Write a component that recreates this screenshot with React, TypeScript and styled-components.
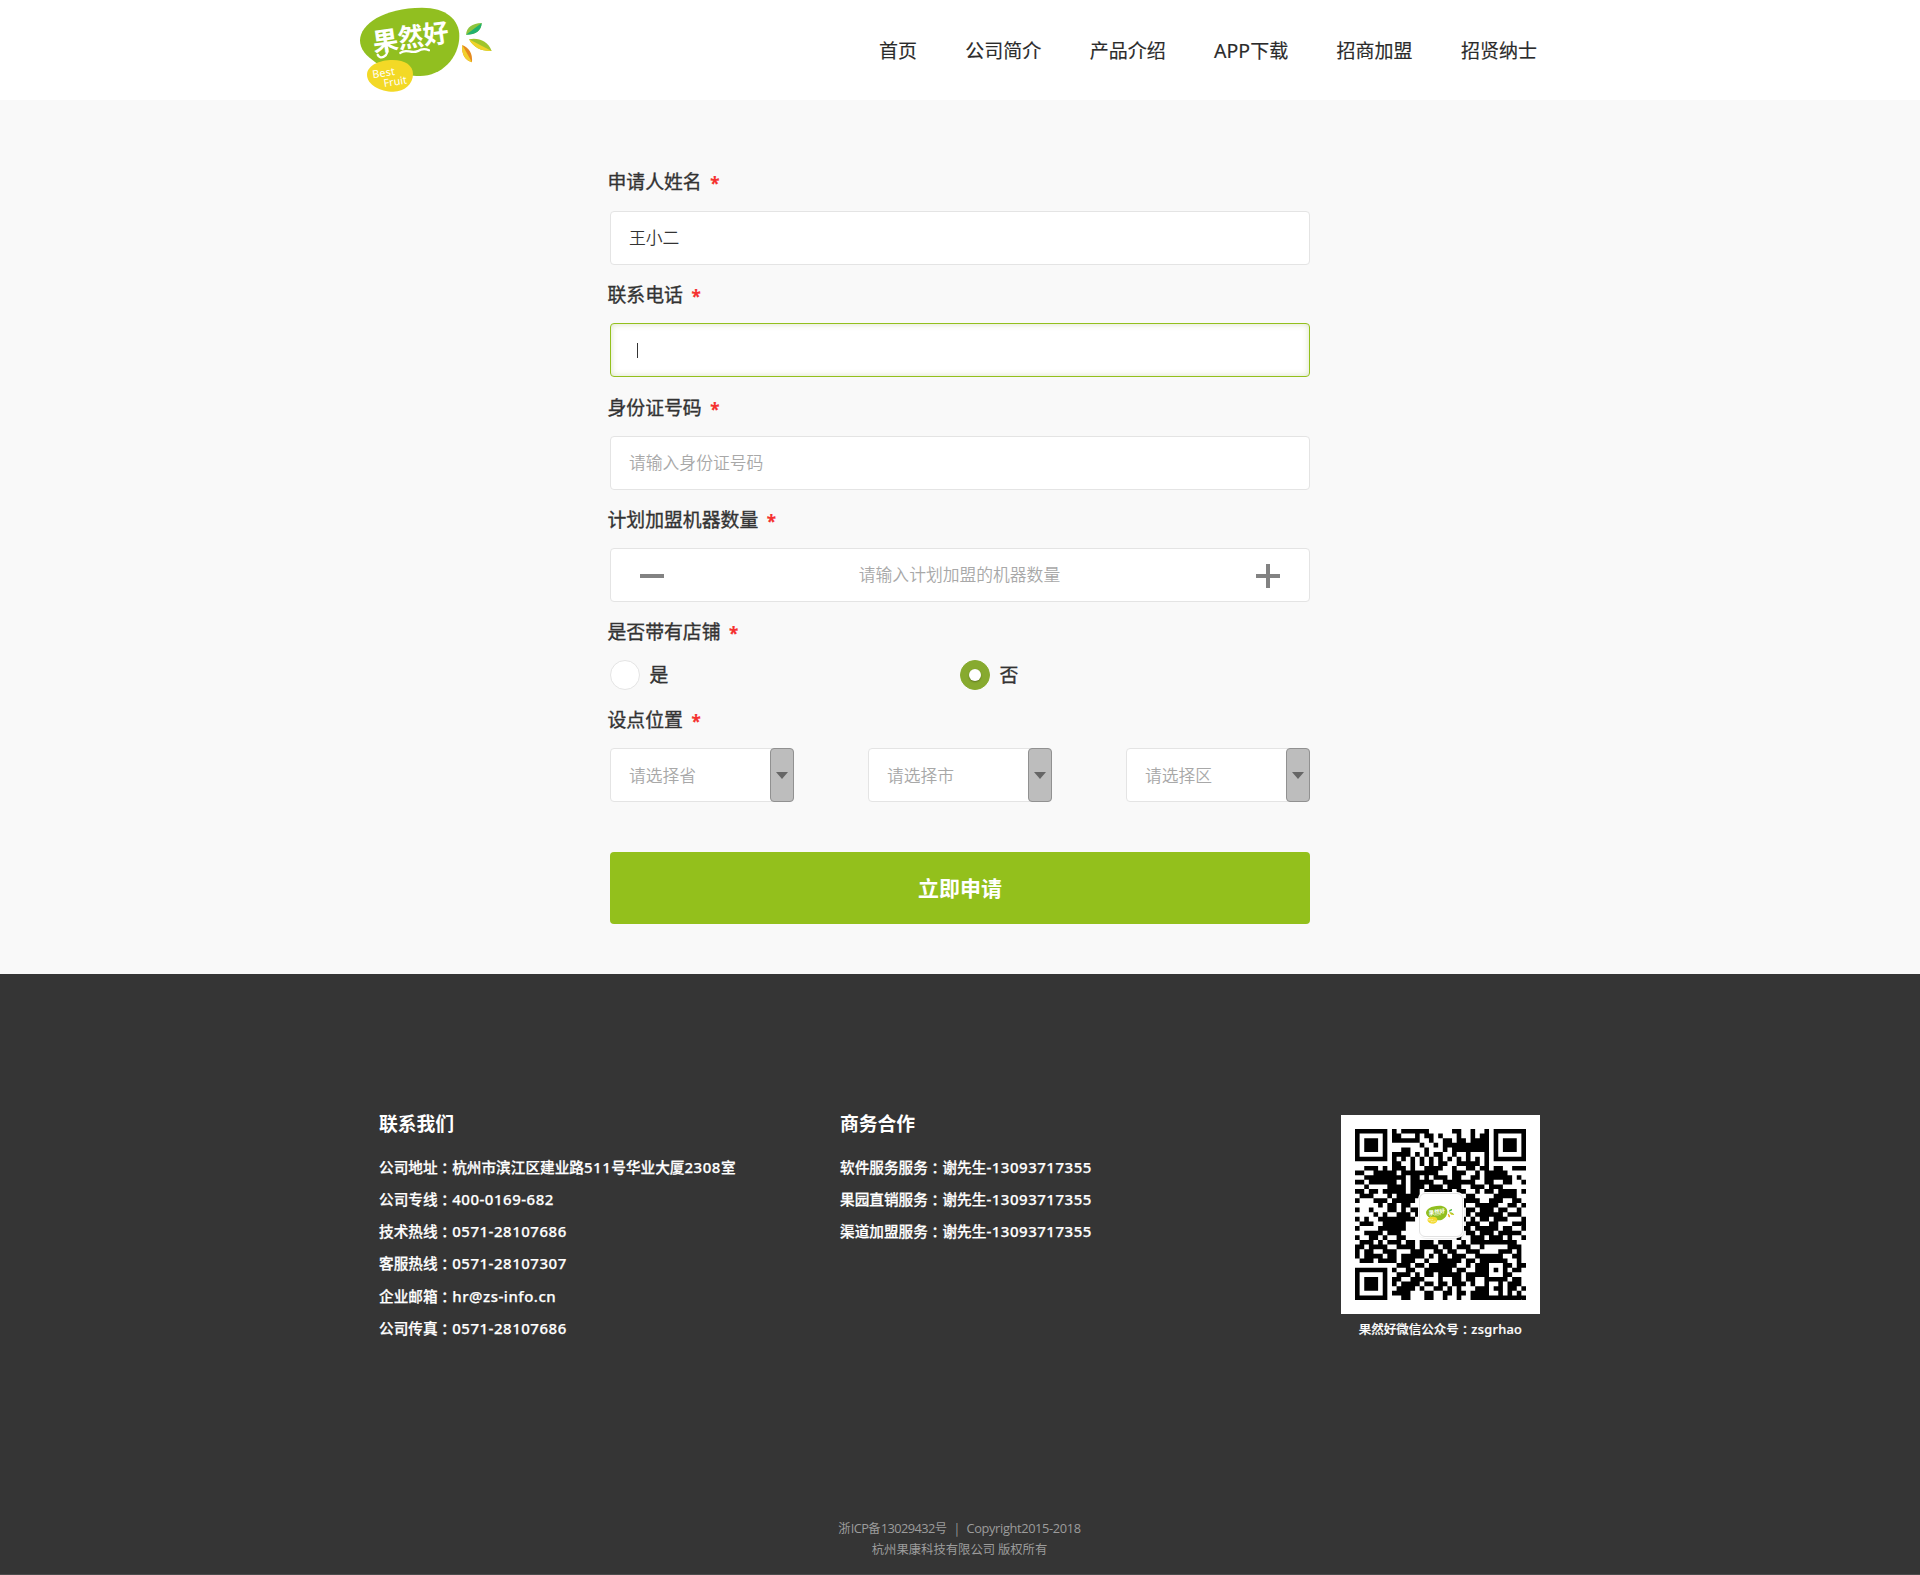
import React, { useState } from "react";
import styled, { createGlobalStyle, css } from "styled-components";

const green = "#93c01c";
const ink = "#333";

const GlobalStyle = createGlobalStyle`
  *, *::before, *::after { box-sizing: border-box; }
  body {
    margin: 0;
    background: #f9f9f9;
    color: ${ink};
    font-family: "Noto Sans CJK SC", "Noto Sans", sans-serif;
  }
  input, button { font-family: inherit; }
`;

/* ---------- header ---------- */

const Header = styled.header`
  height: 100px;
  background: #fff;
`;

const HeaderInner = styled.div`
  width: 1200px;
  margin: 0 auto;
  display: flex;
  justify-content: space-between;
  align-items: flex-start;
`;

const Nav = styled.nav`
  display: flex;
  gap: 48.4px;
  padding-right: 23px;
`;

const NavLink = styled.a`
  line-height: 100px;
  font-size: 19px;
  font-weight: 400;
  color: #2b2b2b;
  -webkit-text-stroke: 0.15px #2b2b2b;
  white-space: nowrap;
`;

/* ---------- form ---------- */

const Form = styled.form`
  width: 700px;
  height: 874px;
  margin: 0 auto;
  padding-top: 67px;
`;

const Field = styled.section<{ $gap?: number }>`
  margin-bottom: ${(p) => p.$gap ?? 16}px;
`;

const Label = styled.div<{ $space?: number }>`
  display: flex;
  align-items: center;
  height: 28px;
  margin: 0 0 ${(p) => p.$space ?? 15}px -2.5px;
  font-size: 18.85px;
  line-height: 28px;
  -webkit-text-stroke: 0.35px ${ink};
`;

const Star = styled.span`
  margin-left: 8.5px;
  height: 28px;
  font: 700 17px/34px "Noto Sans", sans-serif;
  color: #f5312f;
  -webkit-text-stroke: 0.2px #f5312f;
`;

const boxed = css`
  height: 54px;
  background: #fff;
  border: 1px solid #e4e4e4;
  border-radius: 4px;
`;

const entry = css`
  font-size: 16.8px;
  font-weight: 350;
  color: ${ink};
  &::placeholder {
    color: #a8a8a8;
    opacity: 1;
  }
`;

const TextInput = styled.input`
  ${boxed}
  ${entry}
  display: block;
  width: 100%;
  padding: 0 18px 2px;
  outline: none;
`;

const FocusedBox = styled.div`
  ${boxed}
  display: flex;
  align-items: center;
  padding-left: 26px;
  border-color: ${green};
  box-shadow: inset 0 0 6px rgba(120, 150, 40, 0.28);
`;

const Caret = styled.span`
  width: 1px;
  height: 15px;
  background: ${ink};
`;

const Stepper = styled.div`
  ${boxed}
  display: flex;
  align-items: center;
  justify-content: space-between;
  padding: 0 29px;
`;

const StepInput = styled.input`
  ${entry}
  flex: 1;
  min-width: 0;
  border: 0;
  padding: 0 1px 2px 0;
  outline: none;
  background: transparent;
  text-align: center;
`;

const StepButton = styled.button`
  width: 24px;
  height: 24px;
  margin-top: 2px;
  padding: 0;
  border: 0;
  background: none;
  color: #828282;
  svg { display: block; }
`;

const Radios = styled.div`
  display: grid;
  grid-template-columns: 350px 350px;
`;

const RadioItem = styled.label`
  display: flex;
  align-items: center;
  gap: 9.5px;
  height: 30px;
  font-size: 18.85px;
  line-height: 28px;
  -webkit-text-stroke: 0.35px ${ink};
`;

const RadioText = styled.span`
  height: 30px;
`;

const Dot = styled.span<{ $on: boolean }>`
  display: grid;
  place-items: center;
  width: 30px;
  height: 30px;
  border-radius: 50%;
  background: ${(p) => (p.$on ? "#87aa2f" : "#fff")};
  border: 1px solid ${(p) => (p.$on ? "#87aa2f" : "#e4e4e4")};
  &::after {
    content: "";
    width: 12px;
    height: 12px;
    border-radius: 50%;
    background: #fff;
    box-shadow: ${(p) => (p.$on ? "0 1px 2px rgba(0, 0, 0, 0.3)" : "none")};
  }
`;

const Selects = styled.div`
  display: flex;
  justify-content: space-between;
`;

const SelectBox = styled.div`
  ${boxed}
  ${entry}
  display: flex;
  justify-content: space-between;
  width: 184px;
  padding-left: 18px;
  line-height: 52px;
  color: #a8a8a8;
`;

const SelectArrow = styled.span`
  display: grid;
  place-items: center;
  width: 24px;
  height: 54px;
  margin: -1px -1px 0 0;
  background: #bdbdbd;
  border: 1px solid #919191;
  border-radius: 4px;
  &::after {
    content: "";
    border: 6px solid transparent;
    border-top: 7px solid #666;
    border-bottom: 0;
  }
`;

const Submit = styled.button`
  display: block;
  width: 100%;
  height: 72px;
  margin-top: 50px;
  padding: 0 0 3px;
  border: 0;
  border-radius: 4px;
  background: ${green};
  color: #fff;
  font-size: 21px;
  font-weight: 700;
`;

/* ---------- footer ---------- */

const Footer = styled.footer`
  height: 601px;
  background: #353535;
  border-bottom: 1px solid #4c4c4c;
  color: #fff;
  display: flex;
  flex-direction: column;
  justify-content: space-between;
`;

const FooterInner = styled.div`
  width: 1162px;
  margin: 0 auto;
  padding-top: 134px;
  display: grid;
  grid-template-columns: 461px 1fr 199px;
`;

const Column = styled.div`
  display: flex;
  flex-direction: column;
`;

const ColumnTitle = styled.h3`
  margin: 0 0 13px;
  height: 30px;
  font-size: 18.8px;
  line-height: 30px;
  font-weight: 600;
`;

const InfoLine = styled.div`
  height: 32.15px;
  font-size: 14.65px;
  line-height: 32px;
  font-weight: 500;
  -webkit-text-stroke: 0.25px #fff;
  white-space: nowrap;
`;

const Latin = styled.span<{ $size: number; $family: string; $spacing: number }>`
  font-family: ${(p) => p.$family}, sans-serif;
  font-size: ${(p) => p.$size}px;
  letter-spacing: ${(p) => p.$spacing}px;
`;

const Colon = styled.span`
  position: relative;
  top: 1px;
  font-family: "Noto Sans CJK TC", sans-serif;
`;

const QrCard = styled.div`
  display: grid;
  place-items: center;
  width: 199px;
  height: 199px;
  margin: 7px 0 0 -1px;
  background: #fff;
`;

const QrBadge = styled.div`
  display: grid;
  place-items: center;
  width: 44px;
  height: 44px;
  border: 1px solid #e2e2e2;
  border-radius: 6px;
  background: #fff;
  box-shadow: 0 0 0 1px #fff, 1px 1px 2px rgba(0, 0, 0, 0.25);
  grid-area: 1 / 1;
  z-index: 1;
`;

const QrSvg = styled.svg`
  grid-area: 1 / 1;
`;

const QrCaption = styled.div`
  height: 30px;
  margin-left: -2px;
  font-size: 12.5px;
  line-height: 29px;
  font-weight: 500;
  text-align: center;
  white-space: nowrap;
  -webkit-text-stroke: 0.2px #fff;
`;

const Legal = styled.div`
  padding-bottom: 14px;
  color: #9c9c9c;
  font-size: 12.35px;
  line-height: 21px;
  text-align: center;
`;

const LegalRow = styled.div`
  display: flex;
  justify-content: center;
  align-items: baseline;
  height: 21px;
  padding-right: 1px;
  white-space: pre;
`;

const Divider = styled.span`
  margin: 0 8px;
`;

/* ---------- pieces ---------- */

type MixedProps = { text: string; size: number; family?: string; spacing?: number };

function Mixed({ text, size, family = '"Noto Sans"', spacing = 0 }: MixedProps) {
  const parts = text.split(/([\x21-\x7e]+|：)/).filter(Boolean);
  return (
    <>
      {parts.map((part, i) => {
        if (part === "：") return <Colon key={i}>{part}</Colon>;
        if (/^[\x21-\x7e]/.test(part))
          return (
            <Latin key={i} $size={size} $family={family} $spacing={spacing}>
              {part}
            </Latin>
          );
        return <React.Fragment key={i}>{part}</React.Fragment>;
      })}
    </>
  );
}

function Logo({ width }: { width: number }) {
  return (
    <svg width={width} height={(width * 100) / 140} viewBox="60 0 420 300" aria-label="果然好">
      <path
        d="M60 121C61 72 130 24 246 23C318 23 358 58 358 108C358 174 304 228 240 228C210 228 200 226 180 220L108 188C78 168 60 148 60 121Z"
        fill="#91bf20"
      />
      <path
        d="M81 224C81 198 116 180 158 180C196 180 219 197 219 222C219 252 194 275 160 275C120 275 81 254 81 224Z"
        fill="#f3d926"
      />
      <g transform="rotate(-8 212 120)" fill="#fff">
        <text
          x="98"
          y="140"
          fontSize="78"
          fontWeight="700"
          textLength="230"
          lengthAdjust="spacingAndGlyphs"
          fontFamily="Noto Sans CJK SC, sans-serif"
        >
          果然好
        </text>
        <path
          d="M138 132C142 160 112 168 108 150M176 154C196 142 206 162 228 156C242 150 252 152 262 158"
          fill="none"
          stroke="#fff"
          strokeWidth="7"
          strokeLinecap="round"
        />
      </g>
      <g fill="#fff" fontFamily="Noto Sans, sans-serif" fontSize="32" fontWeight="400">
        <text transform="translate(99 235) rotate(-9)" textLength="68">Best</text>
        <text transform="translate(133 261) rotate(-9)" textLength="70">Fruit</text>
      </g>
      <path d="M378 104C380 82 396 70 425 69C424 92 408 104 378 104Z" fill="#8fc53c" />
      <path d="M378 104L425 69C424 92 408 104 378 104Z" fill="#22b16d" />
      <path d="M387 118C416 112 444 124 455 153C424 154 402 144 387 118Z" fill="#9fc42c" />
      <path d="M387 118L455 153C424 154 402 144 387 118Z" fill="#f0d32a" />
      <path d="M367 135C388 144 398 160 396 187C374 180 364 162 367 135Z" fill="#e58a1e" />
      <path d="M367 135L396 187C374 180 364 162 367 135Z" fill="#f2d02d" />
    </svg>
  );
}

const qrRows = [
  "1111111010111111000001100100101111111",
  "1000001011000101101000100101101000001",
  "1011101011111100100110110111101011101",
  "1011101000000010010111111111101011101",
  "1011101000110001000101111111101011101",
  "1000001011110101011001001000101000001",
  "1111111010101010101010101010101111111",
  "0000000011001010101100111110100000000",
  "0011101011101001111001001101101100111",
  "1100111110111111110001110010111110000",
  "0011111111101101011101100110111111010",
  "1101111110101111100111111100110011001",
  "0010000111101110111011100111011100000",
  "1101101111101101111110110010110111101",
  "0111000101111100000000001100001111100",
  "1000111011111000000000011110011100110",
  "0000010110110000000000010011111001101",
  "1001000110101100000000001101110110010",
  "0000101001110100000000001011111101110",
  "1010011111111000000000010101101110001",
  "0111001111100000000000001110011000111",
  "1000011111100000000000011011111011001",
  "0011110111000000000000001101110111110",
  "1001101001100000000000100111011101001",
  "0111010111011011101110010111111111100",
  "1101111001111011110110111001000001110",
  "1011001110001110011011001110000111010",
  "1011110110111110101101110011111100110",
  "0111011110111001001111101101111110010",
  "0000000001110110111111001011100011011",
  "1111111010011001111110110011101010110",
  "1000001001110101101111101111100011000",
  "1011101011001110001001101100111110110",
  "1011101010111101101101110100100101110",
  "1011101001111010011010100011101101101",
  "1000001011110001100110110111100101010",
  "1111111000110001100100100111111111111",
];

function QrCode() {
  const d = qrRows
    .flatMap((row, y) =>
      [...row].map((cell, x) => (cell === "1" ? `M${x} ${y}h1v1h-1z` : ""))
    )
    .join("");
  return (
    <QrSvg width="171" height="171" viewBox="0 0 37 37">
      <path d={d} fill="#000" />
    </QrSvg>
  );
}

const navItems = ["首页", "公司简介", "产品介绍", "APP下载", "招商加盟", "招贤纳士"];
const contact = [
  "公司地址：杭州市滨江区建业路511号华业大厦2308室",
  "公司专线：400-0169-682",
  "技术热线：0571-28107686",
  "客服热线：0571-28107307",
  "企业邮箱：hr@zs-info.cn",
  "公司传真：0571-28107686",
];
const business = [
  "软件服务服务：谢先生-13093717355",
  "果园直销服务：谢先生-13093717355",
  "渠道加盟服务：谢先生-13093717355",
];

function FieldLabel({ children, space }: { children: string; space?: number }) {
  return (
    <Label $space={space}>
      {children}
      <Star>*</Star>
    </Label>
  );
}

export default function App() {
  const [hasShop, setHasShop] = useState("否");
  return (
    <>
      <GlobalStyle />
      <Header>
        <HeaderInner>
          <Logo width={140} />
          <Nav>
            {navItems.map((item) => (
              <NavLink key={item}>
                <Mixed text={item} size={19.5} />
              </NavLink>
            ))}
          </Nav>
        </HeaderInner>
      </Header>

      <Form>
        <Field $gap={15}>
          <FieldLabel space={16}>申请人姓名</FieldLabel>
          <TextInput defaultValue="王小二" />
        </Field>
        <Field>
          <FieldLabel>联系电话</FieldLabel>
          <FocusedBox>
            <Caret />
          </FocusedBox>
        </Field>
        <Field $gap={15}>
          <FieldLabel>身份证号码</FieldLabel>
          <TextInput placeholder="请输入身份证号码" />
        </Field>
        <Field $gap={15}>
          <FieldLabel>计划加盟机器数量</FieldLabel>
          <Stepper>
            <StepButton type="button" aria-label="减少">
              <svg width="24" height="24">
                <path d="M0 10h24v4H0z" fill="currentColor" />
              </svg>
            </StepButton>
            <StepInput placeholder="请输入计划加盟的机器数量" />
            <StepButton type="button" aria-label="增加">
              <svg width="24" height="24">
                <path d="M0 10h10V0h4v10h10v4H14v10h-4V14H0z" fill="currentColor" />
              </svg>
            </StepButton>
          </Stepper>
        </Field>
        <Field $gap={15}>
          <FieldLabel>是否带有店铺</FieldLabel>
          <Radios>
            {["是", "否"].map((option) => (
              <RadioItem key={option} onClick={() => setHasShop(option)}>
                <Dot $on={hasShop === option} />
                <RadioText>{option}</RadioText>
              </RadioItem>
            ))}
          </Radios>
        </Field>
        <Field $gap={0}>
          <FieldLabel>设点位置</FieldLabel>
          <Selects>
            {["请选择省", "请选择市", "请选择区"].map((text) => (
              <SelectBox key={text}>
                {text}
                <SelectArrow />
              </SelectBox>
            ))}
          </Selects>
        </Field>
        <Submit type="button">立即申请</Submit>
      </Form>

      <Footer>
        <FooterInner>
          <Column>
            <ColumnTitle>联系我们</ColumnTitle>
            {contact.map((line) => (
              <InfoLine key={line}>
                <Mixed text={line} size={15} spacing={0.52} />
              </InfoLine>
            ))}
          </Column>
          <Column>
            <ColumnTitle>商务合作</ColumnTitle>
            {business.map((line) => (
              <InfoLine key={line}>
                <Mixed text={line} size={15} spacing={0.52} />
              </InfoLine>
            ))}
          </Column>
          <Column>
            <QrCard>
              <QrCode />
              <QrBadge>
                <Logo width={30} />
              </QrBadge>
            </QrCard>
            <QrCaption>
              <Mixed text="果然好微信公众号：zsgrhao" size={12.8} spacing={0.3} />
            </QrCaption>
          </Column>
        </FooterInner>
        <Legal>
          <LegalRow>
            <Mixed text="浙ICP备13029432号" size={12.8} family={'"Open Sans"'} spacing={-0.55} />
            <Divider>|</Divider>
            <Mixed text="Copyright2015-2018" size={12.8} family={'"Open Sans"'} spacing={-0.35} />
          </LegalRow>
          <LegalRow>杭州果康科技有限公司 版权所有</LegalRow>
        </Legal>
      </Footer>
    </>
  );
}
